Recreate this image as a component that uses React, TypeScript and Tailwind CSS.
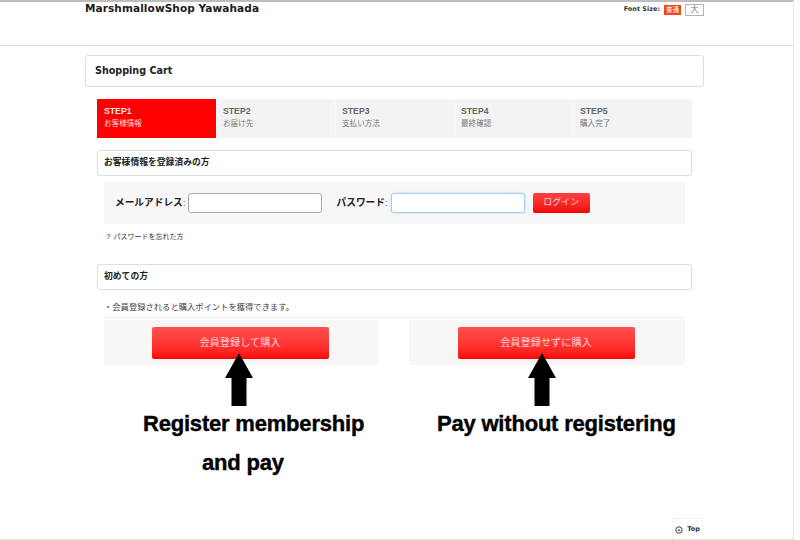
const jp = "font-['Liberation_Sans','Noto_Sans_CJK_JP',sans-serif]";

const steps = [
  ["STEP1", "お客様情報"],
  ["STEP2", "お届け先"],
  ["STEP3", "支払い方法"],
  ["STEP4", "最終確認"],
  ["STEP5", "購入完了"],
];

function Arrow() {
  return (
    <svg width="28" height="53" viewBox="0 0 28 53" className="block">
      <path d="M14 0 L28 25 L21.5 25 L21.5 53 L6.5 53 L6.5 25 L0 25 Z" fill="#000" />
    </svg>
  );
}

function Section({ children }: { children: React.ReactNode }) {
  return (
    <div className="h-[26px] mx-3 flex items-center rounded-[3px] border border-[#dedede] bg-white pl-[6px] text-[8.8px] font-bold text-[#222]">
      {children}
    </div>
  );
}

function CtaBlock({ label, outer, arrowLeft, note, noteClass }: { label: string; outer: string; arrowLeft: number; note: React.ReactNode; noteClass: string }) {
  return (
    <div className={`${outer} h-[45px] bg-[#f7f7f7] flex justify-center pt-[7px] pr-[2px] relative`}>
      <div className="w-[177px] h-[32px] rounded-[2px] bg-gradient-to-b from-[#ff5050] to-[#ff0000] flex items-center justify-center text-[10.2px] text-[#ffd0d0]">
        {label}
      </div>
      <div className="absolute top-[33px]" style={{ left: arrowLeft }}>
        <Arrow />
      </div>
      <div className={noteClass}>{note}</div>
    </div>
  );
}

export default function App() {
  const noteBase =
    "absolute top-[84px] font-['Liberation_Sans',sans-serif] font-bold text-[22px] tracking-[-0.2px] leading-[39px] text-black whitespace-nowrap [-webkit-text-stroke:0.4px_black]";
  return (
    <div className={`${jp} relative w-[800px] h-[540px] bg-white overflow-hidden text-[#222]`}>
      <div className="w-[794px] h-[540px] border-r border-[#e6e6e6] border-b border-b-[#e0e0e0]">
        <header className="h-[46px] border-t-2 border-t-[#bdbdbd] border-b border-b-[#dcdcdc] pl-[85px] pr-[89px] flex justify-between items-start">
          <div className="font-['DejaVu_Sans',sans-serif] font-bold text-[10.5px] leading-[12px] text-[#1c1c1c] tracking-[0.1px]">
            MarshmallowShop Yawahada
          </div>
          <div className="flex items-start gap-[4px] pt-[3px]">
            <span className="font-['DejaVu_Sans',sans-serif] font-bold text-[6.5px] leading-[9px] text-[#333]">Font Size:</span>
            <span className="w-[17px] h-[10px] bg-[#f04a1c] text-white text-[6.5px] leading-[10px] text-center">普通</span>
            <span className="w-[19px] h-[12px] -mt-px border border-[#b5b5b5] text-[#777] text-[8px] leading-[10px] text-center">大</span>
          </div>
        </header>

        <div className="pl-[85px] pt-[9px] w-[704px]">
          <div className="h-[32px] rounded-[3px] border border-[#dedede] flex items-center pl-[9px] font-['DejaVu_Sans',sans-serif] font-bold text-[9.6px] text-[#222]">
            Shopping Cart
          </div>

          <div className="mt-[12px] mx-3 h-[39px] flex">
            {steps.map(([a, b], i) => (
              <div
                key={a}
                className={`flex-1 pt-[7px] ${i === 0 ? "pl-[7px] bg-[#ff0000] text-[#ffd9d9]" : "pl-[6px] bg-[#f3f3f3] text-[#777] border-l border-[#f9f9f9]"}`}
              >
                <div className={`font-bold text-[8.7px] leading-[11px] ${i === 0 ? "text-[#ffe5e5]" : "text-[#666]"}`}>{a}</div>
                <div className="text-[7.6px] leading-[11px] mt-[1px]">{b}</div>
              </div>
            ))}
          </div>

          <div className="mt-[12px]">
            <Section>お客様情報を登録済みの方</Section>
          </div>

          <div className="mt-[6px] ml-[19px] w-[581px] h-[42px] bg-[#f7f7f7] flex items-center pl-[11px]">
            <span className="text-[9.7px] font-bold text-[#222]">メールアドレス<span className="font-normal text-[#666]">:</span></span>
            <div className="ml-[2px] w-[134px] h-[20px] bg-white rounded-[3px] border border-[#aaaaaa]" />
            <span className="ml-[15px] text-[9.7px] font-bold text-[#222]">パスワード<span className="font-normal text-[#666]">:</span></span>
            <div className="ml-[3px] w-[134px] h-[20px] bg-white rounded-[3px] border border-[#a9cdee] shadow-[0_0_2px_#9cc8f0]" />
            <div className="ml-[8px] w-[57px] h-[20px] rounded-[2px] bg-gradient-to-b from-[#ff4040] to-[#f00000] flex items-center justify-center text-[9px] text-[#ffd0d0]">
              ログイン
            </div>
          </div>

          <div className="mt-[7px] ml-[21px] h-[11px] flex gap-[3px] text-[7px] leading-[11px] text-[#333]">
            <span className="text-[8px]">?</span>
            <span>パスワードを忘れた方</span>
          </div>

          <div className="mt-[22px]">
            <Section>初めての方</Section>
          </div>

          <div className="mt-[12px] ml-[19px] w-[581px] h-[16px] border-b border-[#eeeeee] text-[8.3px] leading-[11px] text-[#444]">・会員登録されると購入ポイントを獲得できます。</div>

          <div className="mt-[2px] ml-[19px] w-[581px] flex justify-between">
            <CtaBlock
              label="会員登録して購入"
              outer="w-[274px]"
              arrowLeft={121}
              noteClass={`${noteBase} left-[39px]`}
              note={<>Register membership<span className="block ml-[59px]">and pay</span></>}
            />
            <CtaBlock
              label="会員登録せずに購入"
              outer="w-[276px]"
              arrowLeft={119}
              noteClass={`${noteBase} left-[28px]`}
              note="Pay without registering"
            />
          </div>
        </div>
      </div>

      <div className="absolute left-[672px] top-[518px] w-[31px] h-[21px] pt-px border-x border-t border-[#f2f2f2] bg-white flex items-center justify-center gap-[4px] font-['DejaVu_Sans',sans-serif] text-[6.5px] font-bold text-[#333]">
        <svg width="8" height="8" viewBox="0 0 8 8">
          <circle cx="4" cy="4" r="3.2" fill="none" stroke="#333" strokeWidth="0.9" />
          <path d="M2.4 4.8 L4 3 L5.6 4.8 Z" fill="#333" />
        </svg>
        Top
      </div>
    </div>
  );
}
